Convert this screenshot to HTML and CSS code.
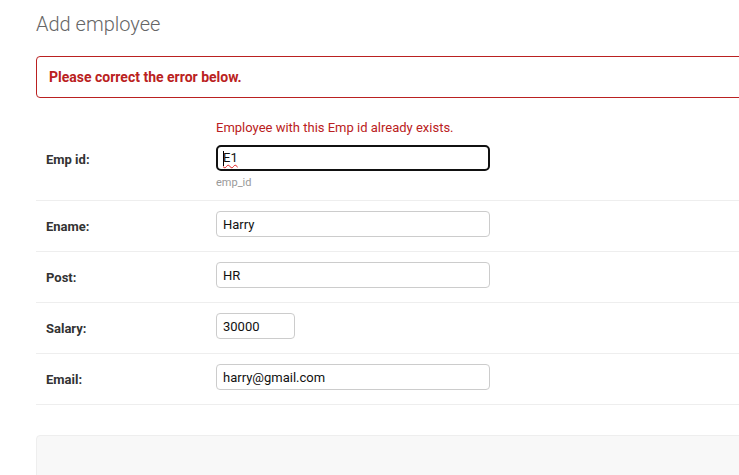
FILE: index.html
```html
<!DOCTYPE html>
<html lang="en">
<head>
<meta charset="utf-8">
<title>Add employee</title>
<link rel="stylesheet" href="styles.css">
</head>
<body>
<div class="content">
  <h1 class="page-title">Add employee</h1>
  <p class="errornote">Please correct the error below.</p>
  <form class="change-form">
    <fieldset class="module">
      <div class="form-row errors">
        <ul class="errorlist"><li>Employee with this Emp id already exists.</li></ul>
        <div class="row-inner">
          <label class="field-label">Emp id:</label>
          <div class="field-box">
            <div class="text-input is-focused"><span class="caret"></span><span class="misspelled">E1</span></div>
            <div class="help">emp_id</div>
          </div>
        </div>
      </div>
      <div class="form-row">
        <div class="row-inner">
          <label class="field-label">Ename:</label>
          <div class="field-box"><input class="text-input" type="text" value="Harry"></div>
        </div>
      </div>
      <div class="form-row">
        <div class="row-inner">
          <label class="field-label">Post:</label>
          <div class="field-box"><input class="text-input" type="text" value="HR"></div>
        </div>
      </div>
      <div class="form-row">
        <div class="row-inner">
          <label class="field-label">Salary:</label>
          <div class="field-box"><input class="text-input text-input--short" type="text" value="30000"></div>
        </div>
      </div>
      <div class="form-row">
        <div class="row-inner">
          <label class="field-label">Email:</label>
          <div class="field-box"><input class="text-input" type="text" value="harry@gmail.com"></div>
        </div>
      </div>
    </fieldset>
    <div class="submit-row"></div>
  </form>
</div>
</body>
</html>
```
FILE: styles.css
```css
html, body {
  margin: 0;
  padding: 0;
  overflow: hidden;
  background: #fff;
}
body {
  font-family: Roboto, "Liberation Sans", sans-serif;
  color: #333;
  font-size: 14px;
}
.content {
  width: 1000px;
  padding: 12px 0 0 36px;
}
.page-title {
  margin: 0 0 20px;
  font-size: 20px;
  line-height: 24px;
  font-weight: 300;
  color: #666;
}
.errornote {
  margin: 0 0 12px;
  padding: 10px 12px;
  font-size: 14px;
  line-height: 20px;
  font-weight: 700;
  color: #ba2121;
  border: 1px solid #ba2121;
  border-radius: 4px;
}
.change-form {
  margin: 0;
}
.module {
  margin: 0 0 30px;
  padding: 0;
  border: 0;
  min-width: 0;
}
.form-row {
  padding: 10px;
  border-bottom: 1px solid #eee;
}
.errorlist {
  list-style: none;
  margin: 0 0 9px 170px;
  padding: 0;
  color: #ba2121;
  font-size: 13px;
  line-height: 16px;
}
.row-inner {
  display: flex;
  align-items: flex-start;
}
.field-label {
  width: 160px;
  padding: 8px 10px 0 0;
  font-size: 13px;
  line-height: 16px;
  font-weight: 700;
  color: #333;
}
.form-row.errors .field-label {
  padding-top: 7px;
}
.field-box {
  padding-bottom: 4px;
}
.form-row.errors .field-box {
  padding-bottom: 0;
}
.text-input {
  display: block;
  box-sizing: border-box;
  width: 274px;
  height: 26px;
  margin: 0;
  padding: 1px 6px 0;
  border: 1px solid #ccc;
  border-radius: 4px;
  font-family: Roboto, "Liberation Sans", sans-serif;
  font-size: 13px;
  line-height: 22px;
  color: #111;
  background: #fff;
  outline: none;
}
.text-input--short {
  width: 79px;
}
.text-input.is-focused {
  border: 2px solid #111;
  padding: 0 5px;
  border-radius: 5px;
  display: flex;
  align-items: center;
}
.caret {
  display: inline-block;
  width: 1px;
  height: 15px;
  background: #000;
  margin-right: -1px;
}
.misspelled {
  text-decoration: underline wavy #e02020;
  text-decoration-thickness: 1px;
  text-underline-offset: 2px;
}
.help {
  margin-top: 5px;
  font-size: 11px;
  line-height: 14px;
  color: #999;
}
.submit-row {
  height: 80px;
  background: #f8f8f8;
  border: 1px solid #eee;
  border-radius: 4px;
}
```
